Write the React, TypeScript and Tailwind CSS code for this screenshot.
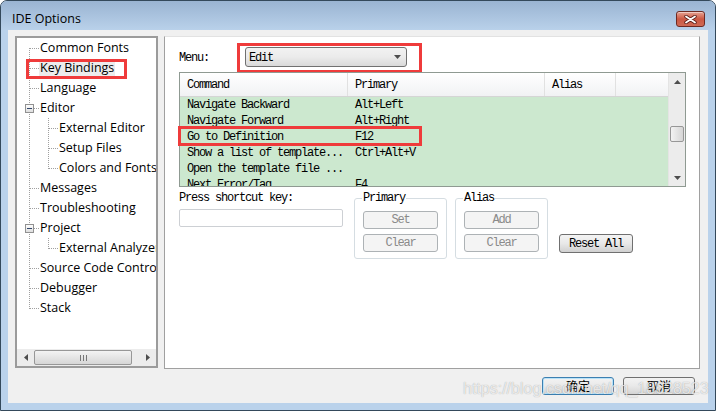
import React from 'react';

type TreeItem = { label: string; level: number; expanded?: boolean; selected?: boolean };

const treeItems: TreeItem[] = [
  { label: 'Common Fonts', level: 0 },
  { label: 'Key Bindings', level: 0, selected: true },
  { label: 'Language', level: 0 },
  { label: 'Editor', level: 0, expanded: true },
  { label: 'External Editor', level: 1 },
  { label: 'Setup Files', level: 1 },
  { label: 'Colors and Fonts', level: 1 },
  { label: 'Messages', level: 0 },
  { label: 'Troubleshooting', level: 0 },
  { label: 'Project', level: 0, expanded: true },
  { label: 'External Analyzer', level: 1 },
  { label: 'Source Code Control', level: 0 },
  { label: 'Debugger', level: 0 },
  { label: 'Stack', level: 0 },
];

const bindings = [
  ['Navigate Backward', 'Alt+Left'],
  ['Navigate Forward', 'Alt+Right'],
  ['Go to Definition', 'F12'],
  ['Show a list of template...', 'Ctrl+Alt+V'],
  ['Open the template file ...', ''],
  ['Next Error/Tag', 'F4'],
];

const mono = "font-['Liberation_Mono',monospace] text-[12px] tracking-[-1.2px]";

function TreeLines() {
  const segs: string[] = [];
  const boxes: React.ReactNode[] = [];
  let lastTop = 0;
  treeItems.forEach((it, i) => {
    const cy = 10 + 20 * i + 0.5;
    if (it.level === 0) {
      lastTop = i;
      segs.push(`M${it.expanded ? 17 : 13} ${cy} H22`);
      if (it.expanded) {
        boxes.push(
          <g key={i}>
            <rect x={8.5} y={cy - 4} width={8} height={8} fill="url(#box)" stroke="#919191" />
            <path d={`M10 ${cy} H15`} stroke="#33476b" />
          </g>
        );
        let q = i + 1;
        while (q < treeItems.length && treeItems[q].level === 1) q++;
        segs.push(`M31.5 ${20 * i + 20} V${10 + 20 * (q - 1) + 1}`);
      }
    } else {
      segs.push(`M32 ${cy} H41`);
    }
  });
  segs.unshift(`M12.5 10 V${10 + 20 * lastTop + 1}`);
  return (
    <svg className="absolute left-0 top-0 pointer-events-none" width="160" height="290" shapeRendering="crispEdges">
      <defs>
        <linearGradient id="box" x1="0" y1="0" x2="0" y2="1">
          <stop offset="0" stopColor="#ffffff" />
          <stop offset="1" stopColor="#dcdcdc" />
        </linearGradient>
      </defs>
      <path d={segs.join(' ')} stroke="#a0a0a0" strokeDasharray="1 1" fill="none" />
      {boxes}
    </svg>
  );
}

function Arrow({ dir }: { dir: 'up' | 'down' | 'left' | 'right' }) {
  const d = {
    up: 'M0 4 L3.5 0 L7 4 Z',
    down: 'M0 0 L7 0 L3.5 4 Z',
    left: 'M4 0 L4 7 L0 3.5 Z',
    right: 'M0 0 L4 3.5 L0 7 Z',
  }[dir];
  const w = dir === 'up' || dir === 'down' ? 7 : 4;
  const h = dir === 'up' || dir === 'down' ? 4 : 7;
  return (
    <svg width={w} height={h} viewBox={`0 0 ${w} ${h}`}>
      <path d={d} fill="#4d4d4d" />
    </svg>
  );
}

function TreePanel() {
  return (
    <div className="w-[143px] h-[332px] border-2 border-[#9b9b9b] bg-white flex flex-col">
      <div className="flex-1 min-h-0 overflow-hidden">
        <div className="relative font-['Open_Sans',sans-serif] text-[12.5px] text-black">
          <TreeLines />
          {treeItems.map((it) => (
            <div
              key={it.label}
              className={`h-[20px] flex items-center whitespace-nowrap ${it.level === 0 ? 'pl-[22px]' : 'pl-[41px]'}`}
            >
              <span className={`px-px leading-[16px] ${it.selected ? 'bg-[#ececec]' : ''}`}>{it.label}</span>
            </div>
          ))}
          <div className="absolute left-[9px] top-[21px] w-[101px] h-[20px] border-[3px] border-[#ef3b3b]" />
        </div>
      </div>
      <div className="h-[17px] shrink-0 flex bg-[#ececec]">
        <div className="w-[17px] flex items-center justify-center">
          <Arrow dir="left" />
        </div>
        <div className="flex-1 flex items-center">
          <div className="w-[98px] h-[15px] rounded-[2px] border border-[#979797] bg-gradient-to-b from-[#f3f3f3] to-[#d6d6d6] flex items-center justify-center gap-[2px]">
            <div className="w-px h-[6px] bg-[#777]" />
            <div className="w-px h-[6px] bg-[#777]" />
            <div className="w-px h-[6px] bg-[#777]" />
          </div>
        </div>
        <div className="w-[17px] flex items-center justify-center">
          <Arrow dir="right" />
        </div>
      </div>
    </div>
  );
}

function SmallButton({ label, disabled }: { label: string; disabled?: boolean }) {
  return (
    <div
      className={`h-[18px] rounded-[3px] border flex items-center justify-center ${mono} ${
        disabled
          ? 'border-[#adb2b5] bg-[#f4f4f4] text-[#8a8a8a]'
          : 'border-[#707070] bg-gradient-to-b from-[#f4f4f4] via-[#e8e8e8] to-[#d2d2d2] text-black'
      }`}
    >
      {label}
    </div>
  );
}

function ListView() {
  return (
    <div className="relative mt-[5px] w-[507px]">
      <div className="h-[115px] border border-[#8f9a92] flex overflow-hidden bg-white">
        <div className="flex-1 min-w-0 flex flex-col">
          <div className={`h-[24px] shrink-0 flex border-b border-[#d5d5d5] bg-gradient-to-b from-[#ffffff] to-[#f1f2f4] ${mono}`}>
            <div className="w-[168px] pl-[7px] flex items-center border-r border-[#e1e1e1]">Command</div>
            <div className="w-[197px] pl-[7px] flex items-center border-r border-[#e1e1e1]">Primary</div>
            <div className="w-[71px] pl-[7px] flex items-center border-r border-[#e1e1e1]">Alias</div>
            <div className="flex-1" />
          </div>
          <div className={`flex-1 min-h-0 overflow-hidden bg-[#cce8cf] ${mono}`}>
            {bindings.map(([cmd, key]) => (
              <div key={cmd} className="h-[16px] flex items-center whitespace-nowrap">
                <div className="w-[168px] pl-[7px]">{cmd}</div>
                <div className="w-[197px] pl-[7px]">{key}</div>
              </div>
            ))}
          </div>
        </div>
        <div className="w-[17px] shrink-0 flex flex-col bg-[#ececec] border-l border-[#e4e4e4]">
          <div className="h-[17px] flex items-center justify-center">
            <Arrow dir="up" />
          </div>
          <div className="flex-1">
            <div className="mt-[36px] mx-px h-[16px] rounded-[2px] border border-[#979797] bg-gradient-to-r from-[#f3f3f3] to-[#d6d6d6]" />
          </div>
          <div className="h-[17px] flex items-center justify-center">
            <Arrow dir="down" />
          </div>
        </div>
      </div>
      <div className="absolute left-[-1px] top-[54px] w-[244px] h-[20px] border-[3px] border-[#ef3b3b]" />
    </div>
  );
}

function Group({ title, top, bottom }: { title: string; top: string; bottom: string }) {
  return (
    <fieldset className="w-[93px] h-[67px] border border-[#d5dde2] rounded-[3px] pl-[7px] pr-[8px]">
      <legend className={`px-px leading-[13px] ${mono}`}>{title}</legend>
      <div className="pl-px pt-[6px] flex flex-col gap-[5px]">
        <SmallButton label={top} disabled />
        <SmallButton label={bottom} disabled />
      </div>
    </fieldset>
  );
}

function RightPanel() {
  return (
    <div className="w-[536px] h-[333px] border border-[#a0a0a0] border-t-[#e2e2e2] bg-white pl-[14px] pt-[10px]">
      <div className="flex items-center h-[20px]">
        <div className={`w-[66px] pt-px ${mono}`}>Menu:</div>
        <div className="relative w-[162px] h-[20px]">
          <div className="h-full rounded-[3px] border border-[#707070] bg-gradient-to-b from-[#f2f2f2] via-[#ebebeb] to-[#d9d9d9] flex items-center pl-[3px] pr-[5px] justify-between">
            <span className={`pt-px ${mono}`}>Edit</span>
            <Arrow dir="down" />
          </div>
          <div className="absolute left-[-8px] top-[-4px] w-[185px] h-[30px] border-[3px] border-[#ef3b3b]" />
        </div>
      </div>
      <ListView />
      <div className="mt-[5px] flex items-start">
        <div className="w-[164px]">
          <div className={`leading-[13px] ${mono}`}>Press shortcut key:</div>
          <div className="mt-[4px] h-[18px] rounded-[2px] border border-[#cdd0d4] bg-white" />
        </div>
        <div className="ml-[11px]">
          <Group title="Primary" top="Set" bottom="Clear" />
        </div>
        <div className="ml-[8px]">
          <Group title="Alias" top="Add" bottom="Clear" />
        </div>
        <div className="ml-[11px] mt-[42px] w-[74px]">
          <div className={`h-[19px] rounded-[3px] border border-[#707070] bg-gradient-to-b from-[#f4f4f4] via-[#e8e8e8] to-[#d0d0d0] flex items-center justify-center text-black ${mono}`}>
            Reset All
          </div>
        </div>
      </div>
    </div>
  );
}

function DialogButton({ label, primary }: { label: string; primary?: boolean }) {
  return (
    <div
      className={`w-[72px] h-[18px] rounded-[3px] border flex items-center justify-center font-['Noto_Sans_CJK_SC',sans-serif] text-[12px] text-black bg-gradient-to-b from-[#f3f3f3] via-[#e9e9e9] to-[#d4d4d4] ${
        primary ? 'border-[#3c7fb1] shadow-[inset_0_0_0_1px_#b8e2f8]' : 'border-[#707070]'
      }`}
    >
      {label}
    </div>
  );
}

export default function App() {
  return (
    <div className="relative w-[716px] h-[411px] flex flex-col rounded-t-[7px] border border-[#34495b] bg-[#bad2eb] overflow-hidden">
      <div className="h-[29px] shrink-0 flex items-start justify-between bg-gradient-to-b from-[#9ab4d2] to-[#b9d1ea] pl-[11px] pr-[10px]">
        <span className="pt-[10px] leading-[16px] font-['Open_Sans',sans-serif] text-[12.5px] text-black">IDE Options</span>
        <div className="mt-[10px] w-[29px] h-[16px] rounded-[3px] border border-[#6e2a22] bg-gradient-to-b from-[#e6a293] via-[#cc5843] to-[#cf6a55] flex items-center justify-center shadow-[inset_0_1px_0_rgba(255,255,255,0.45)]">
          <svg width="13" height="9" viewBox="0 0 13 9">
            <path d="M2 1.5 L11 7.5 M11 1.5 L2 7.5" stroke="#5b1e18" strokeWidth="3.4" strokeLinecap="round" />
            <path d="M2 1.5 L11 7.5 M11 1.5 L2 7.5" stroke="#ffffff" strokeWidth="1.8" strokeLinecap="round" />
          </svg>
        </div>
      </div>
      <div className="mx-[7px] mb-[7px] flex-1 bg-[#f0f0f0] flex flex-col">
        <div className="flex pt-[6px] pl-[7px] gap-[6px]">
          <TreePanel />
          <RightPanel />
        </div>
        <div className="flex justify-end gap-[9px] pr-[13px] pt-[8px]">
          <DialogButton label="确定" primary />
          <DialogButton label="取消" />
        </div>
      </div>
      <div className="absolute left-[462px] top-[380px] font-['Liberation_Sans',sans-serif] text-[16px] leading-[16px] text-white/75 [text-shadow:0_0_1px_rgba(0,0,0,0.35)] whitespace-nowrap pointer-events-none">
        https://blog.csdn.net/qq_18628523
      </div>
    </div>
  );
}
